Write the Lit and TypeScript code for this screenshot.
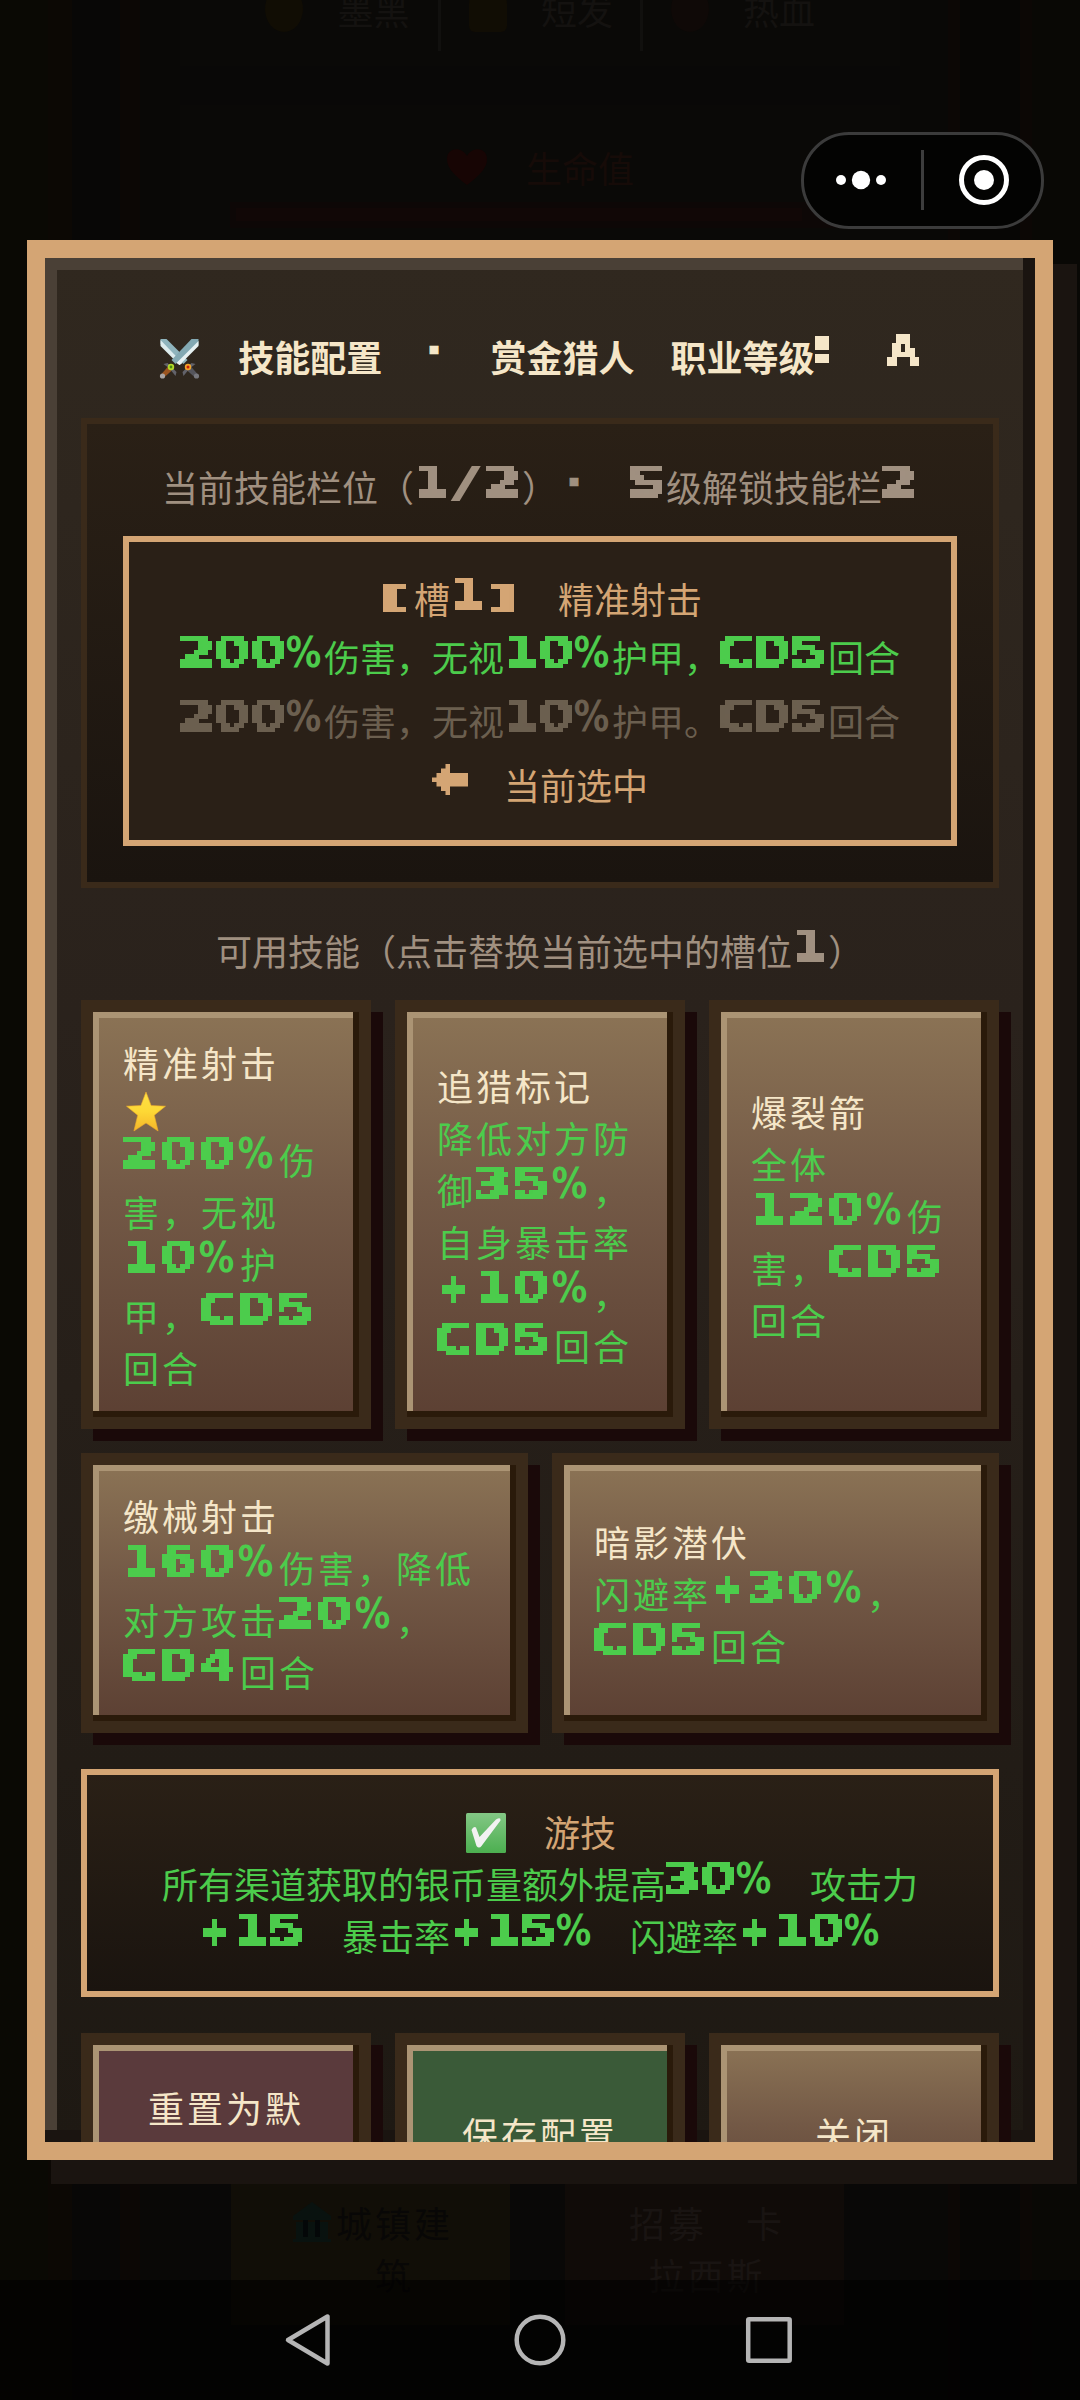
import { LitElement, html, css, svg } from "lit";
import { customElement, property } from "lit/decorators.js";

/** Horizontal stretch that brings each latin glyph to the same wide cell. */
const STRETCH: Record<string, number> = {
  "0": 1.22, "1": 1.24, "2": 1.34, "3": 1.32, "4": 1.2, "5": 1.32, "6": 1.24,
  "%": 0.82, "+": 0.88, "/": 1.9, "[": 2.1, "]": 2.1, ":": 1.1, "·": 1.1,
  C: 1.24, D: 1.1, S: 1.36, A: 0.98,
};
const KIND: Record<string, string> = { "%": "fine", "/": "fine", "[": "bracket", "]": "bracket", "+": "heavy", "·": "dot", ":": "heavy colon" };

const wide = (text: string) =>
  text.split(/([0-9A-Z%+/[\]:·]+)/).map((part, i) =>
    i % 2
      ? html`<span class="run">${[...part].map((c) => html`<span class="cell ${KIND[c] ?? ""}"><span class="grid"><span class="glyph" style="--s:${STRETCH[c] ?? 1.2}">${c}</span></span></span>`)}</span>`
      : part
  );

/** Grows every sampled dot into a square block. */
const blocks = html`<svg class="defs" width="0" height="0">
  <filter id="blocks" filterUnits="userSpaceOnUse" x="0" y="0" width="36" height="32" color-interpolation-filters="sRGB">
    <feComponentTransfer><feFuncA type="discrete" tableValues="0 0 0 0 1 1 1 1 1"/></feComponentTransfer>
    <feMorphology operator="dilate" radius="2"/>
  </filter>
</svg>`;

const swords = html`<svg class="emoji swords" viewBox="0 0 40 40">
  <path d="M1 0h6l21 21-4 4L1 5z" fill="#8fb4bd"/><path d="M1 1v6l19 19 3-2z" fill="#dcebed"/>
  <path d="M39 0h-7L12 21l4 4L39 6z" fill="#83a9b3"/><path d="M39 2v5L20 26l-3-2z" fill="#e6f1f2"/>
  <path d="M9 27l-7 8 3 3 8-7z" fill="#9a5420"/><circle cx="3" cy="37" r="2.6" fill="#a9a4a4"/>
  <path d="M31 27l7 8-3 3-8-7z" fill="#55555c"/><circle cx="37" cy="37" r="2.6" fill="#77777d"/>
  <path d="M4 25l4-1 9 9-1 4-4-5-4-4z" fill="#62626a"/><path d="M36 25l-4-1-9 9 1 4 4-5 4-4z" fill="#62626a"/>
  <circle cx="11.500" cy="28" r="3.200" fill="#b4d92b"/><circle cx="11.500" cy="28" r="1.400" fill="#4b8a12"/>
  <circle cx="28.500" cy="28" r="3.200" fill="#f2a52a"/><circle cx="28.500" cy="28" r="1.500" fill="#c9200c"/>
</svg>`;

const star = html`<svg class="emoji star" viewBox="0 0 40 40">
  <defs><linearGradient id="sg" x1="0" y1="0" x2="0" y2="1"><stop offset="0" stop-color="#fde047"/><stop offset=".5" stop-color="#fdd835"/><stop offset="1" stop-color="#f5b52a"/></linearGradient></defs>
  <path d="M20 .5l5.100 13.500 14.400.7L28.300 23.700 32.100 39.500 20 31.500 7.900 39.500l3.800-15.800L.5 14.700l14.400-.7z" fill="url(#sg)" stroke="#eda92a" stroke-width=".6" stroke-linejoin="round"/>
</svg>`;

const check = html`<svg class="emoji check" viewBox="0 0 40 40">
  <defs><linearGradient id="cg" x1="0" y1="0" x2="0" y2="1"><stop offset="0" stop-color="#83c785"/><stop offset="1" stop-color="#4caf50"/></linearGradient></defs>
  <rect width="40" height="40" rx="1.500" fill="url(#cg)"/>
  <path d="M5.500 17q2-4 4.500-2.500l3.500 9.500L30 6.500q5-3 4.500 1L15.500 33q-2.500 3-5 0z" fill="#f2f2f2"/>
</svg>`;

const arrow = svg`<path d="M0 3h1v-1h1v-1h1v-1h1v2h4v3h-4v2h-1v-1h-1v-1h-1v-1h-1z" fill="#d4a574"/>`;

const shared = css`
  .defs { position: absolute; }
  .run { white-space: nowrap; }
  .cell {
    display: inline-block; width: 36px; height: 32px; margin-right: var(--track, 0px); vertical-align: var(--lift, 5px);
    font: bold 43.200px/33px "DejaVu Sans", sans-serif; letter-spacing: 0; filter: url(#blocks);
  }
  .grid {
    display: flex; justify-content: center; width: 36px; height: 32px;
    -webkit-mask-image: repeating-linear-gradient(90deg, transparent 0 2px, #000 2px 3px, transparent 3px 7px, #000 7px 8px, transparent 8px 9px),
      repeating-linear-gradient(180deg, transparent 0 2px, #000 2px 3px, transparent 3px 7px, #000 7px 8px, transparent 8px 9px);
    -webkit-mask-composite: source-in;
    mask-composite: intersect;
  }
  .glyph { transform: translateX(-2.200px) scaleX(var(--s)); filter: blur(.7px); }
  .fine { filter: none; }
  .fine .glyph { filter: none; }
  .fine .grid, .dot .grid { -webkit-mask-image: none; mask-image: none; }
  .bracket { font-size: 34px; line-height: 33px; }
  .bracket .grid { line-height: 26px; }
  .dot { filter: none; }
  .dot .glyph { filter: none; -webkit-text-stroke: .5px currentColor; }
  .heavy .glyph { -webkit-text-stroke: 3px currentColor; }
  .colon { vertical-align: 10px; }
  .colon .grid { justify-content: flex-start; }
  .emoji { display: inline-block; vertical-align: baseline; }
`;

@customElement("skill-card")
class SkillCard extends LitElement {
  @property() name = "";
  @property() effect = "";
  @property({ type: Boolean }) starred = false;
  static styles = [shared, css`
    :host {
      --track: 3px; --lift: 7px;
      flex: 1 1 0; min-width: 0; box-sizing: border-box; display: flex; flex-direction: column; justify-content: center;
      border: 12px solid #3a2a1a; padding: 24px 30px; letter-spacing: 3px;
      background: linear-gradient(#8b7355, #735946 45%, #5c4033) padding-box;
      box-shadow: inset -6px -6px #2a1a0a, inset 6px 6px #ab9474, 12px 12px #1a0909;
    }
    .name { color: #f5e6c8; }
    .mark { line-height: 45px; height: 45px; }
    .effect { color: #4ccc4c; }
    .star { width: 40px; height: 41px; margin: 0 0 -6px 3px; }
  `];
  render() {
    return html`${blocks}<div class="name">${this.name}</div>
      ${this.starred ? html`<div class="mark">${star}</div>` : ""}
      <div class="effect">${wide(this.effect)}</div>`;
  }
}

@customElement("action-button")
class ActionButton extends LitElement {
  @property() label = "";
  static styles = css`
    :host {
      flex: 1 1 0; min-width: 0; box-sizing: border-box; height: 200px; display: flex; align-items: center; justify-content: center;
      border: 12px solid #3a2a1a; padding: 0 36px; color: #f5e6c8; letter-spacing: 3px; text-align: center;
      background: linear-gradient(#8b7355, #735946 45%, #5c4033) padding-box;
      box-shadow: inset -6px -6px #2a1a0a, inset 6px 6px #ab9474, 12px 12px #1a0909;
    }
    :host([tone="reset"]) { background: #5a3a3c padding-box; }
    :host([tone="save"]) { background: #3a5a38 padding-box; }
  `;
  render() { return html`<span>${this.label}</span>`; }
}

@customElement("app-root")
class AppRoot extends LitElement {
  static styles = [shared, css`
    :host {
      display: block; position: relative; width: 1080px; height: 2400px; overflow: hidden; background: #090805;
      font: 36px/52px "Noto Sans CJK SC", sans-serif; word-spacing: 27.9px; color: #f5e6c8;
    }
    .page {
      position: absolute; inset: 0; box-sizing: border-box; padding: 0 48px; color: #141210;
      background: linear-gradient(90deg, #0a0904 0 48px, #0c0804 48px 72px, #080706 72px 120px, #0c0705 120px 140px, #090806 140px 180px,
        #090807 180px 900px, #090806 900px 948px, #0c0705 948px 960px, #070605 960px 1020px, #0c0705 1020px 1032px, #090805 1032px);
      display: flex; flex-direction: column; align-items: center;
    }
    .traits { height: 66px; width: 720px; background: #0a0907; display: flex; justify-content: center; }
    .traits > div { display: flex; margin-top: -33px; margin-left: -1px; width: 203px; height: 84px; align-items: center; justify-content: center; gap: 34px; box-sizing: border-box; }
    .traits > div + div { border-left: 3px solid #11100e; }
    .blob { width: 38px; height: 46px; border-radius: 50%; background: #110d04; }
    .blob.b { border-radius: 18px 18px 6px 6px; } .blob.c { background: #0f0907; }
    .life { width: 720px; height: 300px; margin-top: 39px; background: #0a0907; display: flex; flex-direction: column; align-items: center; }
    .life .head { display: flex; align-items: center; gap: 38px; margin-top: 36px; color: #160b08; height: 52px; }
    .life .bar { box-sizing: border-box; width: 620px; height: 26px; margin-top: 9px; padding: 6px; background: #0d0706; }
    .life .fill { height: 13px; width: 566px; background: #110706; }
    .links { margin: 1755px 6px 0 0; display: flex; gap: 55px; letter-spacing: 3px; }
    .links div { box-sizing: border-box; width: 279px; height: 165px; padding: 36px 24px 0; background: #110e07; text-align: center; color: #080706; display: flex; justify-content: center; }
    .links div:first-child { padding-left: 30px; }
    .links div + div { background: #100b08; color: #191412; padding-left: 30px; }
    .hut { width: 38px; height: 40px; margin-top: 6px; margin-right: 5px; flex: none; }
    .capsule {
      position: absolute; left: 801px; top: 132px; width: 243px; height: 97px; box-sizing: border-box;
      border: 3px solid #3b3b3b; border-radius: 48px; background: #030302; display: flex;
    }
    .modal {
      position: absolute; left: 27px; top: 240px; width: 1026px; height: 1920px; box-sizing: border-box; overflow: hidden;
      border: 18px solid #d4a574; padding: 72px 36px 0; display: flex; flex-direction: column; gap: 36px;
      background: linear-gradient(#30281f, #2a221c 40%, #1e1913) padding-box;
      box-shadow: inset -12px -12px #1a1410, inset 12px 12px #4a4036, 24px 24px #1a1410;
    }
    .title { font-weight: bold; text-align: center; white-space: nowrap; --lift: 7px; }
    .swords { width: 41px; height: 40px; margin: 0 2px -7px 2px; }
    .slots {
      border: 6px solid #3a2a1a; padding: 36px; display: flex; flex-direction: column; gap: 24px; text-align: center; color: #a09080;
      background: linear-gradient(#2a2016, #1a140f) padding-box;
    }
    .slot { border: 6px solid #d4a574; background: #2a2017; padding: 30px 0; color: #d4a574; display: flex; flex-direction: column; gap: 12px; }
    .green { color: #4ccc4c; }
    .slot .green { margin-top: -6px; }
    .dim { color: #6b5f4f; }
    .arrow { width: 36px; height: 31.500px; vertical-align: 5px; }
    .available { display: flex; flex-direction: column; gap: 24px; }
    .hint { text-align: center; color: #a09080; }
    .row { display: flex; gap: 24px; flex: none; }
    .passive {
      border: 6px solid #d4a574; padding: 30px; text-align: center; color: #d4a574; --lift: 6px;
      background: linear-gradient(#2a2016, #1a140f) padding-box;
    }
    .check { width: 40px; height: 40px; margin: 0 2px -6px 2px; }
    .nav {
      position: absolute; left: 0; right: 0; bottom: 0; height: 120px; background: rgba(0, 0, 0, .6);
      display: flex; align-items: center; justify-content: center; gap: 169px;
    }
    .nav svg { width: 60px; height: 60px; fill: none; stroke: #b5b5b5; stroke-width: 4.500; stroke-linejoin: round; }
  `];

  private backdrop() {
    return html`<div class="page">
      <div class="traits">
        <div><i class="blob"></i>墨黑</div><div><i class="blob b"></i>短发</div><div><i class="blob c"></i>热血</div>
      </div>
      <div class="life">
        <div class="head"><svg width="42" height="36" viewBox="0 0 42 36"><path d="M21 36C8 26 1 19 1 10 1-2 16-3 21 7 26-3 41-2 41 10c0 9-7 16-20 26z" fill="#170504"/></svg>生命值</div>
        <div class="bar"><div class="fill"></div></div>
      </div>
      <div class="links">
        <div><svg class="hut" viewBox="0 0 38 40"><path d="M0 14L19 0l19 14v4H0zM3 20h32v17H3zM0 37h38v3H0z" fill="#09120f"/><path d="M10 18h5v17h-5zM22 18h5v17h-5z" fill="#040708"/></svg><span>城镇建<br>筑</span></div>
        <div><span>招募 卡<br>拉西斯</span></div>
      </div>
    </div>`;
  }

  render() {
    return html`${blocks}${this.backdrop()}
      <div class="modal">
        <div class="title">${swords} 技能配置 ${wide("·")} 赏金猎人 职业等级${wide(":")} ${wide("A")}</div>
        <div class="slots">
          <div>${wide("当前技能栏位（1/2）· S级解锁技能栏2")}</div>
          <div class="slot">
            <div>${wide("[槽1] 精准射击")}</div>
            <div class="green">${wide("200%伤害，无视10%护甲，CD5回合")}</div>
            <div class="dim">${wide("200%伤害，无视10%护甲。CD5回合")}</div>
            <div><svg class="arrow" viewBox="0 0 8 7">${arrow}</svg> 当前选中</div>
          </div>
        </div>
        <div class="available">
          <div class="hint">${wide("可用技能（点击替换当前选中的槽位1）")}</div>
          <div class="row">
            <skill-card name="精准射击" starred effect="200%伤害，无视10%护甲，CD5回合"></skill-card>
            <skill-card name="追猎标记" effect="降低对方防御35%，自身暴击率+10%，CD5回合"></skill-card>
            <skill-card name="爆裂箭" effect="全体120%伤害，CD5回合"></skill-card>
          </div>
          <div class="row">
            <skill-card name="缴械射击" effect="160%伤害，降低对方攻击20%，CD4回合"></skill-card>
            <skill-card name="暗影潜伏" effect="闪避率+30%，CD5回合"></skill-card>
          </div>
        </div>
        <div class="passive">
          <div>${check} 游技</div>
          <div class="green">${wide("所有渠道获取的银币量额外提高30% 攻击力 +15 暴击率+15% 闪避率+10%")}</div>
        </div>
        <div class="row">
          <action-button tone="reset" label="重置为默认"></action-button>
          <action-button tone="save" label="保存配置"></action-button>
          <action-button label="关闭"></action-button>
        </div>
      </div>
      <div class="capsule">
        <svg width="237" height="91" viewBox="0 0 237 91"><g fill="#fff"><circle cx="37" cy="45" r="5"/><circle cx="57" cy="45" r="9.200"/><circle cx="77" cy="45" r="5"/><circle cx="180" cy="45" r="10"/></g>
          <rect x="117" y="15" width="3" height="60" fill="#3d3d3d"/><circle cx="180" cy="45" r="22.500" fill="none" stroke="#fff" stroke-width="5"/></svg>
      </div>
      <div class="nav">
        <svg viewBox="0 0 60 60"><path d="M46.500 6.500V53.500L7 30z"/></svg>
        <svg viewBox="0 0 60 60"><circle cx="30" cy="30" r="23.300"/></svg>
        <svg viewBox="0 0 60 60"><rect x="9.200" y="9.200" width="41.500" height="41.500" rx="1"/></svg>
      </div>`;
  }
}
